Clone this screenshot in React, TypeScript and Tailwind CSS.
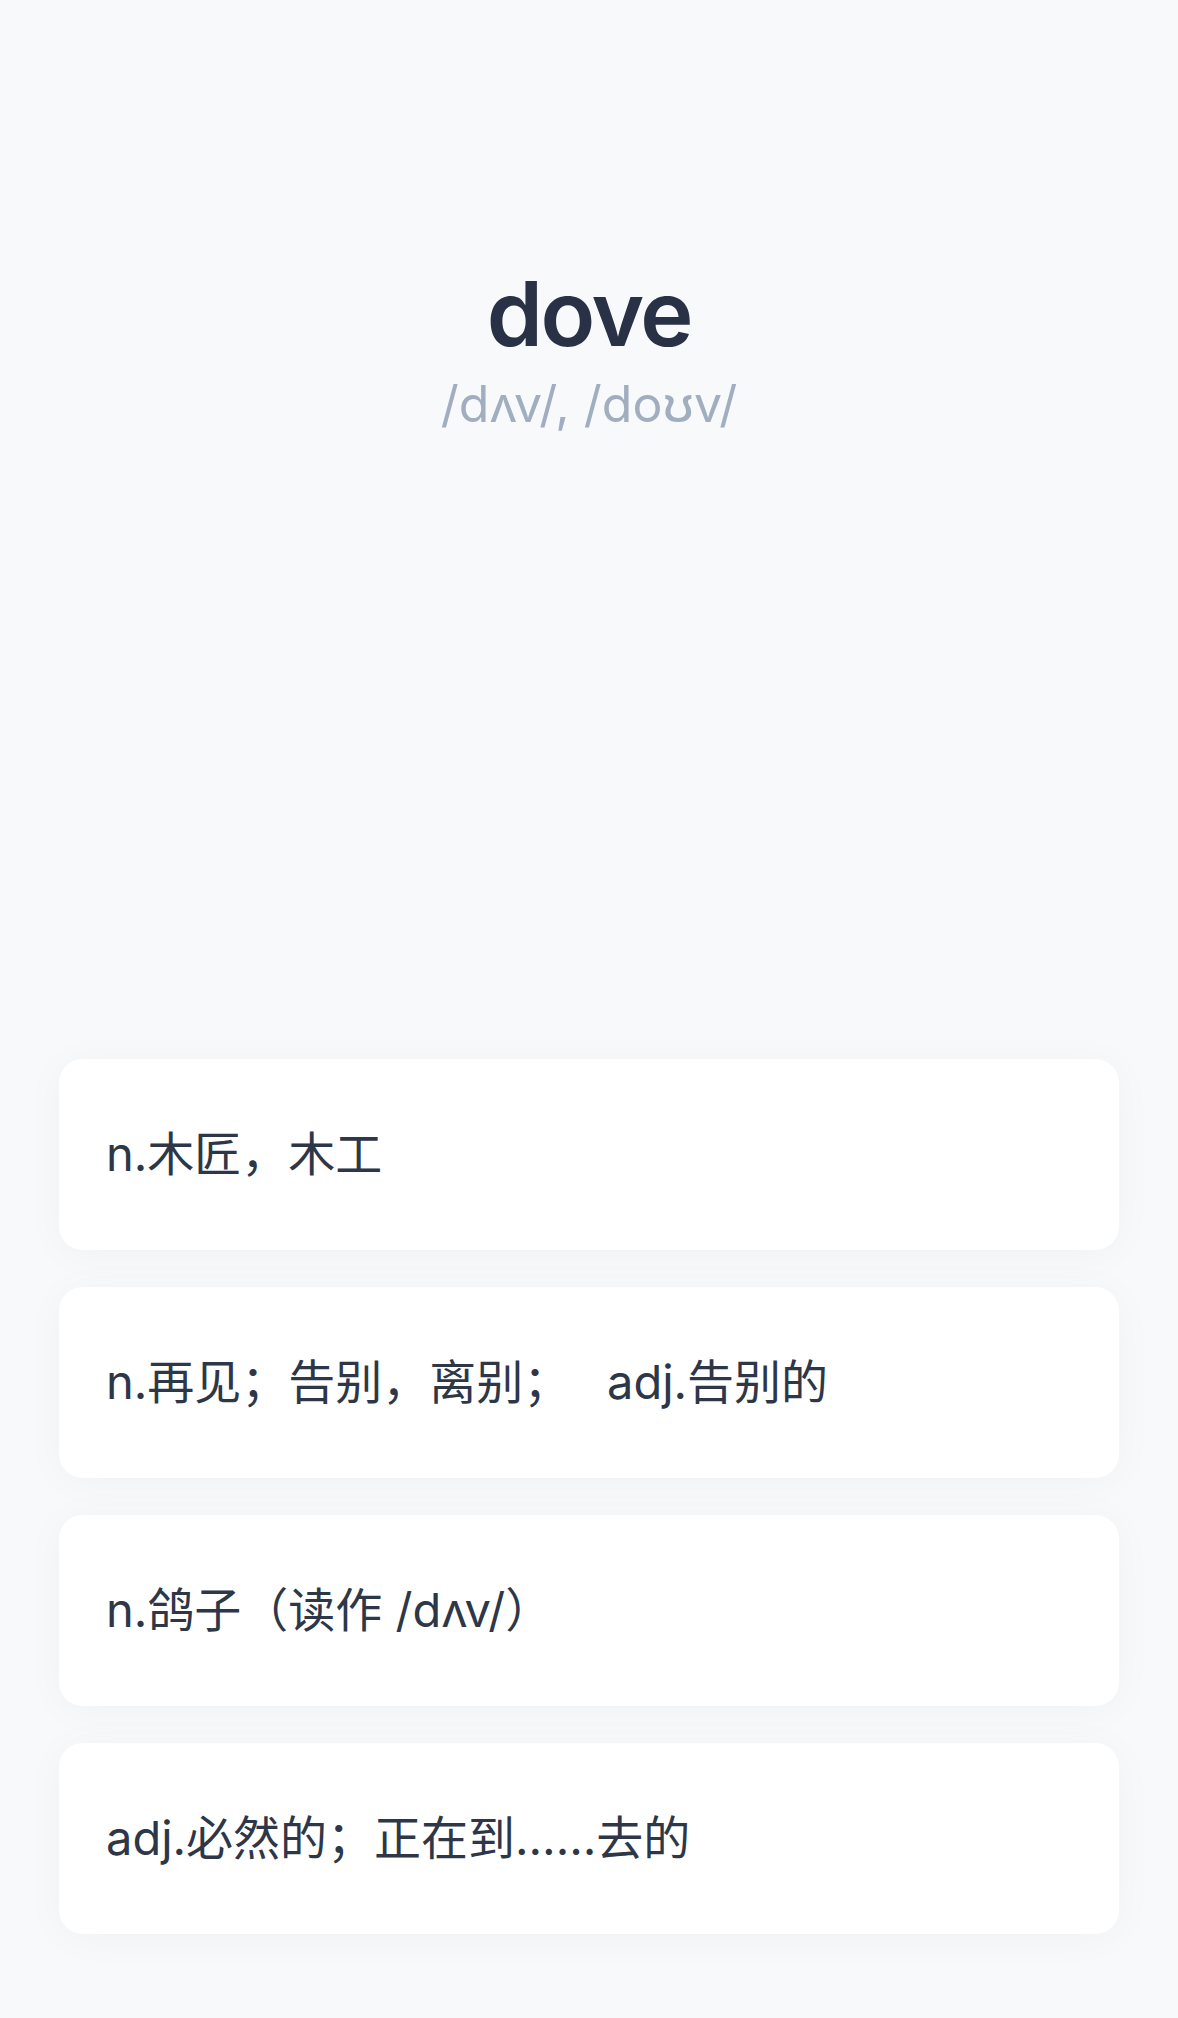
import React from 'react';

const meanings = [
  'n.木匠，木工',
  'n.再见；告别，离别；　 adj.告别的',
  'n.鸽子（读作 /dʌv/）',
  'adj.必然的；正在到……去的',
];

const font = { fontFamily: 'Inter, "Noto Sans CJK SC", sans-serif' };

export default function App() {
  return (
    <div className="min-h-[2018px] bg-[#f8f9fb] flex flex-col" style={font}>
      <div className="flex flex-col items-center pt-[269px] h-[1059px]">
        <h1 className="text-[90px] leading-none font-semibold text-[#283145] tracking-tight">dove</h1>
        <p className="mt-[20px] text-[50px] leading-none text-[#a0aec0]">/dʌv/, /doʊv/</p>
      </div>
      <div className="flex flex-col gap-[37px] px-[59px]">
        {meanings.map((m) => (
          <div
            key={m}
            className="h-[191px] bg-white rounded-[24px] flex items-center px-[47px] shadow-[0_4px_40px_rgba(0,0,0,0.035)]"
          >
            <span className="text-[47px] text-[#2d3748]">{m}</span>
          </div>
        ))}
      </div>
    </div>
  );
}
